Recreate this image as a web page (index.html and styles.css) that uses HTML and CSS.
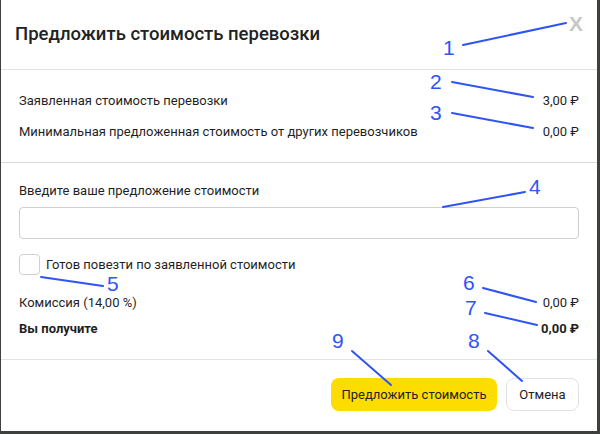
FILE: index.html
```html
<!DOCTYPE html>
<html lang="ru">
<head>
<meta charset="utf-8">
<title>Предложить стоимость перевозки</title>
<link rel="stylesheet" href="styles.css">
</head>
<body>
<div class="modal">
  <div class="modal-header">
    <h1 class="modal-title">Предложить стоимость перевозки</h1>
    <span class="close">X</span>
  </div>
  <div class="info">
    <div class="row"><span>Заявленная стоимость перевозки</span><span>3,00 ₽</span></div>
    <div class="row"><span>Минимальная предложенная стоимость от других перевозчиков</span><span>0,00 ₽</span></div>
  </div>
  <div class="form">
    <label class="field-label">Введите ваше предложение стоимости</label>
    <div class="input"></div>
    <div class="check-row"><span class="checkbox"></span><span>Готов повезти по заявленной стоимости</span></div>
    <div class="row sum-row"><span>Комиссия (14,00 %)</span><span>0,00 ₽</span></div>
    <div class="row sum-row bold"><span>Вы получите</span><span>0,00 ₽</span></div>
  </div>
  <div class="footer">
    <button class="btn btn-primary">Предложить стоимость</button>
    <button class="btn btn-secondary">Отмена</button>
  </div>
  <svg class="annot" width="596" height="431" viewBox="0 0 596 431">
    <g stroke="#2f54f5" stroke-width="2" stroke-linecap="round">
      <line x1="462" y1="45" x2="565" y2="23"/>
      <line x1="451" y1="82" x2="532" y2="97"/>
      <line x1="451" y1="113" x2="532" y2="128"/>
      <line x1="442" y1="207" x2="524" y2="192"/>
      <line x1="40" y1="277" x2="102" y2="286"/>
      <line x1="482" y1="288" x2="535" y2="302"/>
      <line x1="484" y1="313" x2="536" y2="325"/>
      <line x1="351" y1="351" x2="390" y2="385"/>
      <line x1="487" y1="351" x2="521" y2="381"/>
    </g>
    <g fill="#2f54f5" font-family="Liberation Sans, Arial, sans-serif" font-size="21">
      <text x="442" y="55">1</text>
      <text x="429" y="89">2</text>
      <text x="429" y="120">3</text>
      <text x="528" y="194">4</text>
      <text x="106" y="291">5</text>
      <text x="462" y="290">6</text>
      <text x="464" y="315">7</text>
      <text x="467" y="348">8</text>
      <text x="331" y="348">9</text>
    </g>
  </svg>
</div>
</body>
</html>
```
FILE: styles.css
```css
* { box-sizing: border-box; }
html, body { margin: 0; padding: 0; }
body {
  background: #3d403c;
  width: 600px;
  height: 434px;
  overflow: hidden;
  font-family: Roboto, "Open Sans", "Liberation Sans", sans-serif;
  color: #1f1f1f;
  font-size: 13px;
}
.modal {
  position: relative;
  margin-left: 1px;
  width: 596px;
  height: 431px;
  background: #fff;
  display: flex;
  flex-direction: column;
}
.modal-header {
  height: 70px;
  border-bottom: 1px solid #e3e3e3;
  display: flex;
  align-items: center;
  justify-content: space-between;
  padding: 0 14px 2px 14px;
  flex: none;
}
.modal-title {
  margin: 0;
  font-size: 18.5px;
  font-weight: 500;
  color: #222;
}
.close {
  align-self: flex-start;
  margin-top: 12px;
  font-family: "Liberation Sans", Arial, sans-serif;
  font-weight: 700;
  font-size: 21px;
  color: #c8c8c8;
}
.info {
  padding: 15px 18px 15px 18px;
  border-bottom: 1px solid #d9d9d9;
  flex: none;
}
.row {
  height: 31px;
  display: flex;
  align-items: center;
  justify-content: space-between;
}
.form {
  padding: 19px 18px 0 18px;
  flex: 1;
  display: flex;
  flex-direction: column;
}
.field-label {
  line-height: 18px;
  height: 18px;
}
.input {
  margin-top: 7px;
  height: 32px;
  border: 1px solid #cfcfcf;
  border-radius: 4px;
}
.check-row {
  margin-top: 14px;
  height: 22px;
  display: flex;
  align-items: center;
  gap: 6px;
}
.checkbox {
  width: 21px;
  height: 21px;
  border: 1px solid #cfcfcf;
  border-radius: 4px;
}
.sum-row {
  height: 26px;
}
.check-row + .sum-row { margin-top: 14px; }
.bold { font-weight: 700; }
.footer {
  flex: none;
  height: 72px;
  border-top: 1px solid #e3e3e3;
  display: flex;
  justify-content: flex-end;
  align-items: flex-start;
  gap: 9px;
  padding: 18px 18px 0 18px;
}
.btn {
  height: 33px;
  border-radius: 8px;
  font-family: inherit;
  font-size: 13px;
  color: #222;
  padding: 0;
  white-space: nowrap;
  cursor: pointer;
}
.btn-primary {
  background: #fddd00;
  border: none;
  width: 166px;
}
.btn-secondary {
  background: #fff;
  border: 1px solid #e2e2e2;
  width: 73px;
}
.annot {
  position: absolute;
  left: 0;
  top: 0;
  pointer-events: none;
}
```
